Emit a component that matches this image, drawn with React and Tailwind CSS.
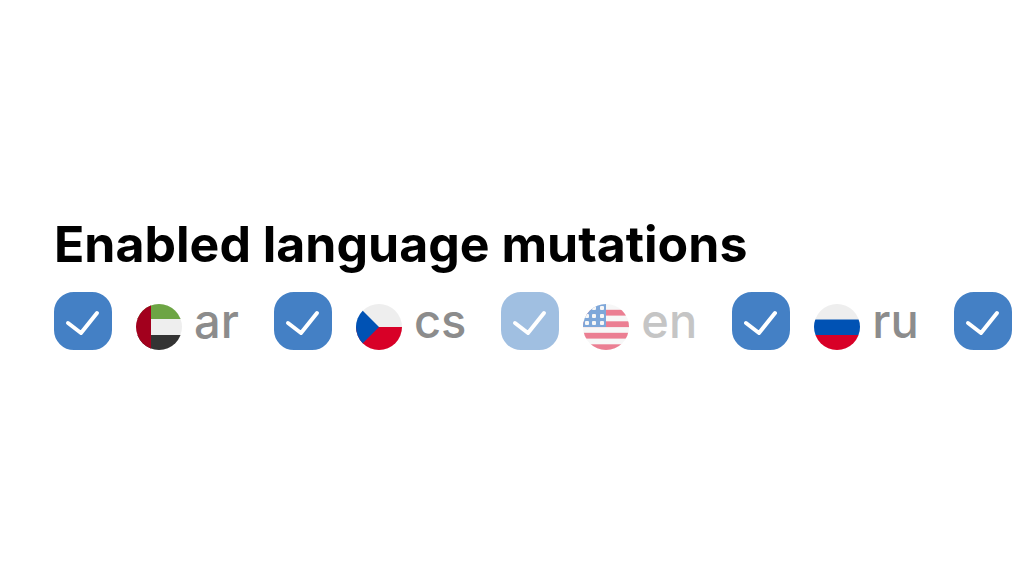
import React, {useState} from "react";

const LANGUAGES = [
    { code: 'ar', enabled: true },
    { code: 'cs', enabled: true },
    { code: 'en', enabled: true, locked: true },
    { code: 'ru', enabled: true },
    { code: 'uk', enabled: true, compact: true }
]

const STARS = [2, 10, 17].flatMap(y => [2, 9, 17].map(x => [x, y]))

// Every flag is drawn on a 46x46 canvas and clipped to a circle by its parent
const FLAGS = {
    ar: (
        <>
            <rect width="46" height="46" fill="#eeeeee"/>
            <rect width="46" height="15" fill="#6da544"/>
            <rect y="31" width="46" height="15" fill="#333333"/>
            <rect width="15" height="46" fill="#a2001d"/>
        </>
    ),
    cs: (
        <>
            <rect width="46" height="46" fill="#eeeeee"/>
            <rect y="23" width="46" height="23" fill="#d80027"/>
            <path d="M0 0 L23 23 L0 46 Z" fill="#0052b4"/>
        </>
    ),
    en: (
        <>
            <rect width="46" height="46" fill="#f0f0f0"/>
            {[5.8, 17.3, 28.8, 40.3].map(y => (
                <rect key={y} y={y} width="46" height="5.8" fill="#d80027"/>
            ))}
            <rect width="23" height="23" fill="#0052b4"/>
            {STARS.map(([x, y]) => (
                <rect key={x + '-' + y} x={x} y={y} width="4" height="4" rx="1" fill="#f0f0f0"/>
            ))}
        </>
    ),
    ru: (
        <>
            <rect width="46" height="46" fill="#eeeeee"/>
            <rect y="15.5" width="46" height="15.5" fill="#0052b4"/>
            <rect y="31" width="46" height="15" fill="#d80027"/>
        </>
    )
}

function Flag(props){
    const {code} = props
    return(
        <svg viewBox="0 0 46 46" aria-hidden="true" className="size-[46px] shrink-0 self-end overflow-hidden rounded-full">
            {FLAGS[code]}
        </svg>
    )
}

function LanguageToggle(props){
    const {language, checked, onChange} = props
    const {code, locked, compact} = language
    return(
        <label className={'flex shrink-0 items-center ' + (locked ? 'opacity-50' : 'cursor-pointer')}>
            <span className="grid size-[58px] shrink-0">
                <input
                    type="checkbox"
                    checked={checked}
                    disabled={locked}
                    onChange={onChange}
                    aria-label={code}
                    className="peer col-start-1 row-start-1 size-full appearance-none rounded-[20px] border-2 border-gray-300 checked:border-[#4480c5] checked:bg-[#4480c5]"
                />
                <svg viewBox="0 0 58 58" fill="none" stroke="white" strokeWidth="4" strokeLinecap="round" strokeLinejoin="round" aria-hidden="true" className="pointer-events-none invisible col-start-1 row-start-1 size-full peer-checked:visible">
                    <path d="M14 31 L27 41 L43 21"/>
                </svg>
            </span>
            {!compact && (
                <span className="ml-6 flex items-center gap-3 self-stretch">
                    <Flag code={code}/>
                    <span className="text-[47px] leading-[58px] font-medium text-[#8c8c8c]">{code}</span>
                </span>
            )}
        </label>
    )
}

export default function App(){
    const [enabled, setEnabled] = useState(LANGUAGES.filter(l => l.enabled).map(l => l.code))

    function toggleLanguage(code){
        if(enabled.includes(code)){
            setEnabled(enabled.filter(val => val !== code))
            return
        }
        setEnabled([...enabled, code])
    }

    return(
        <main className="min-h-screen overflow-hidden bg-white pt-[212px] pl-[54px] font-['Inter',sans-serif]">
            <h1 className="whitespace-nowrap text-[50px] leading-[64px] font-bold text-black">Enabled language mutations</h1>
            <div className="mt-4 flex gap-[35px]">
                {LANGUAGES.map(language => (
                    <LanguageToggle
                        key={language.code}
                        language={language}
                        checked={enabled.includes(language.code)}
                        onChange={() => toggleLanguage(language.code)}
                    />
                ))}
            </div>
        </main>
    )
}
